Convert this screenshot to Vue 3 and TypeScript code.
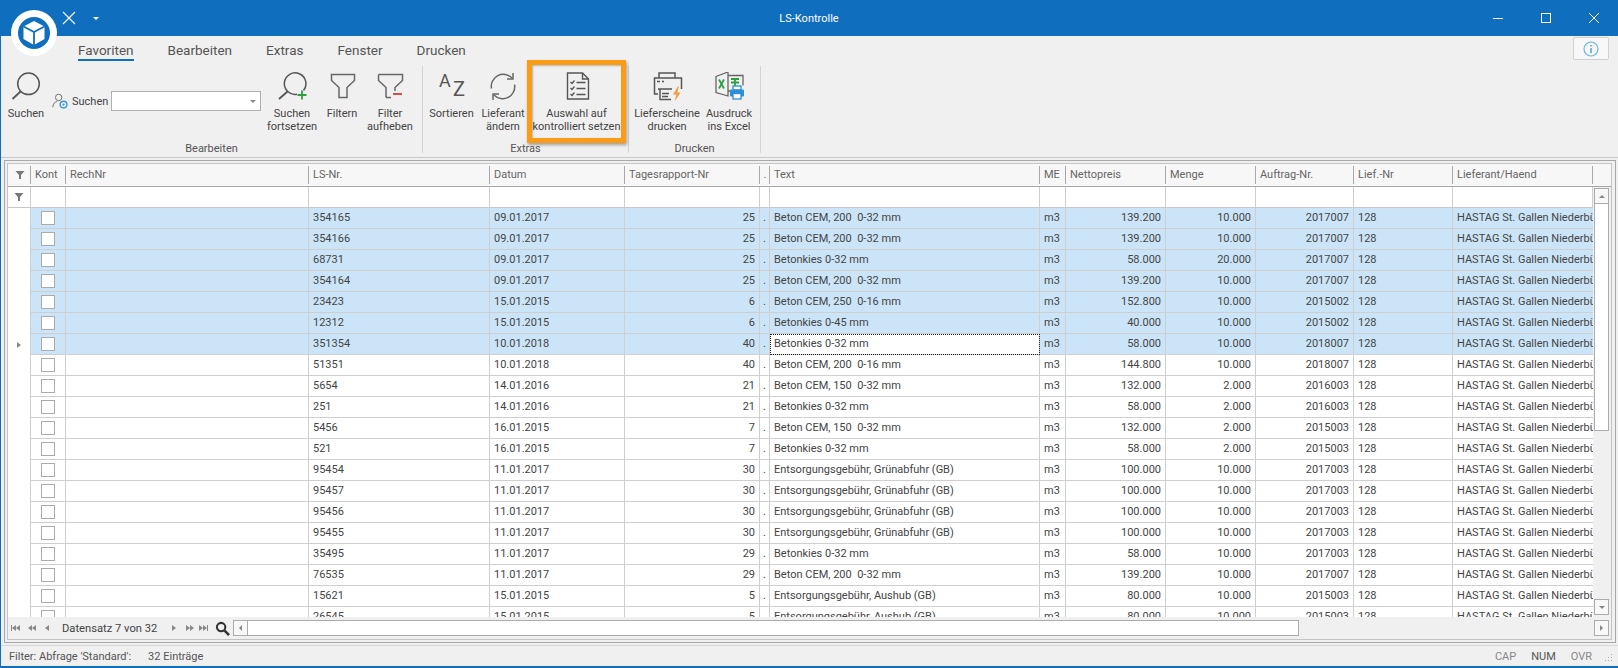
<script setup lang="ts">
type Row = [string, string, string, string, string, string, string];

const beton200 = "Beton CEM, 200\u00a0\u00a00-32 mm";
const beton150 = "Beton CEM, 150\u00a0\u00a00-32 mm";
const kies32 = "Betonkies 0-32 mm";
const gruen = "Entsorgungsgebühr, Grünabfuhr (GB)";
const aushub = "Entsorgungsgebühr, Aushub (GB)";

const rows: Row[] = [
  ["354165", "09.01.2017", "25", beton200, "139.200", "10.000", "2017007"],
  ["354166", "09.01.2017", "25", beton200, "139.200", "10.000", "2017007"],
  ["68731", "09.01.2017", "25", kies32, "58.000", "20.000", "2017007"],
  ["354164", "09.01.2017", "25", beton200, "139.200", "10.000", "2017007"],
  ["23423", "15.01.2015", "6", "Beton CEM, 250\u00a0\u00a00-16 mm", "152.800", "10.000", "2015002"],
  ["12312", "15.01.2015", "6", "Betonkies 0-45 mm", "40.000", "10.000", "2015002"],
  ["351354", "10.01.2018", "40", kies32, "58.000", "10.000", "2018007"],
  ["51351", "10.01.2018", "40", "Beton CEM, 200\u00a0\u00a00-16 mm", "144.800", "10.000", "2018007"],
  ["5654", "14.01.2016", "21", beton150, "132.000", "2.000", "2016003"],
  ["251", "14.01.2016", "21", kies32, "58.000", "2.000", "2016003"],
  ["5456", "16.01.2015", "7", beton150, "132.000", "2.000", "2015003"],
  ["521", "16.01.2015", "7", kies32, "58.000", "2.000", "2015003"],
  ["95454", "11.01.2017", "30", gruen, "100.000", "10.000", "2017003"],
  ["95457", "11.01.2017", "30", gruen, "100.000", "10.000", "2017003"],
  ["95456", "11.01.2017", "30", gruen, "100.000", "10.000", "2017003"],
  ["95455", "11.01.2017", "30", gruen, "100.000", "10.000", "2017003"],
  ["35495", "11.01.2017", "29", kies32, "58.000", "10.000", "2017003"],
  ["76535", "11.01.2017", "29", beton200, "139.200", "10.000", "2017007"],
  ["15621", "15.01.2015", "5", aushub, "80.000", "10.000", "2015003"],
  ["26545", "15.01.2015", "5", aushub, "80.000", "10.000", "2015003"],
];

const headers = ["Kont", "RechNr", "LS-Nr.", "Datum", "Tagesrapport-Nr", ".", "Text", "ME", "Nettopreis", "Menge", "Auftrag-Nr.", "Lief.-Nr", "Lieferant/Haend"];
const tabs = ["Favoriten", "Bearbeiten", "Extras", "Fenster", "Drucken"];
const selectedCount = 7;
const focusedRow = 6;
</script>

<template>
  <div class="window">
    <header class="titlebar">
      <svg class="qat-x" viewBox="0 0 14 14"><path d="M1 1l12 12M13 1L1 13" stroke="#fff" stroke-width="1.1" fill="none" /></svg>
      <span class="qat-arrow"></span>
      <span class="title">LS-Kontrolle</span>
      <div class="win-controls">
        <svg viewBox="0 0 12 12"><path d="M1 6.500h10" stroke="#fff" stroke-width="1" /></svg>
        <svg viewBox="0 0 12 12"><rect x="1.500" y="1.500" width="9" height="9" fill="none" stroke="#fff" stroke-width="1" /></svg>
        <svg viewBox="0 0 12 12"><path d="M1 1l10 10M11 1L1 11" stroke="#fff" stroke-width="1" /></svg>
      </div>
    </header>

    <div class="logo">
      <svg viewBox="0 0 46 46" width="46" height="46">
        <circle cx="23" cy="23" r="23" fill="#fff" />
        <circle cx="23" cy="23" r="16" fill="#106ebe" />
        <path d="M23 11l10.500 5.500v12.500L23 35l-10.500-6V16.500z" fill="#fff" />
        <path d="M12.500 16.500L23 22l10.500-5.500M23 22v13" fill="none" stroke="#106ebe" stroke-width="1.800" />
      </svg>
    </div>

    <nav class="tabs">
      <span v-for="(t, i) in tabs" :key="t" class="tab" :class="{ active: i === 0 }">{{ t }}</span>
      <button class="info">
        <svg viewBox="0 0 16 16" width="16" height="16">
          <circle cx="8" cy="8" r="7" fill="none" stroke="#6db2e3" stroke-width="1.200" />
          <path d="M8 7v5M8 4v1.600" stroke="#4d9ed9" stroke-width="1.500" />
        </svg>
      </button>
    </nav>

    <section class="ribbon">
      <div class="group g-edit">
        <div class="items">
          <div class="item w-suchen">
            <svg class="icon" viewBox="0 0 32 32"><circle cx="18.500" cy="11.800" r="10.800" fill="none" stroke="#555" stroke-width="1.500" /><path d="M10.500 19.500L2.500 27" stroke="#555" stroke-width="1.800" /></svg>
            <span class="label">Suchen</span>
          </div>
          <div class="search-field">
            <svg class="user-ic" viewBox="0 0 18 18" width="16" height="16">
              <circle cx="7.500" cy="5" r="3.600" fill="none" stroke="#666" stroke-width="1" />
              <path d="M1 16c0-4 2-6 5-6.500" fill="none" stroke="#666" stroke-width="1" />
              <circle cx="13" cy="13" r="3.800" fill="none" stroke="#3d97d6" stroke-width="1.600" />
              <circle cx="13" cy="13" r="1.300" fill="#3d97d6" />
            </svg>
            <span>Suchen</span>
            <div class="combo"><i></i></div>
          </div>
          <div class="item w-fort">
            <svg class="icon" viewBox="0 0 32 32"><path d="M27.500 18.500A10.800 10.800 0 1 0 21 22.300" fill="none" stroke="#555" stroke-width="1.500" /><path d="M11.500 19.500L3 27" stroke="#555" stroke-width="1.800" /><path d="M26 18.500v9M21.500 23h9" stroke="#2f9e44" stroke-width="1.800" /></svg>
            <span class="label">Suchen<br />fortsetzen</span>
          </div>
          <div class="item w-filter">
            <svg class="icon" viewBox="0 0 32 32"><path d="M5.500 2.500h23v6l-7.500 7v10h-8v-10l-7.500-7z" fill="none" stroke="#666" stroke-width="1.500" /></svg>
            <span class="label">Filtern</span>
          </div>
          <div class="item w-aufheben">
            <svg class="icon" viewBox="0 0 32 32"><path d="M4.500 2.500h24v6l-7.500 7v3.500M12 25.500v-10l-7.500-7v-6M12 25.500h5" fill="none" stroke="#666" stroke-width="1.500" /><path d="M19 22h9" stroke="#e0464c" stroke-width="2" /></svg>
            <span class="label">Filter<br />aufheben</span>
          </div>
        </div>
        <div class="group-name">Bearbeiten</div>
      </div>

      <div class="group g-extras">
        <div class="items">
          <div class="item w-sort">
            <svg class="icon" viewBox="0 0 32 32"><text x="3" y="15" class="az a">A</text><text x="17" y="24" class="az z">Z</text></svg>
            <span class="label">Sortieren</span>
          </div>
          <div class="item w-liefer">
            <svg class="icon" viewBox="0 0 32 32"><path d="M4.500 16.500A12 12 0 0 1 25 6M27.500 12.500A12 12 0 0 1 7 23" fill="none" stroke="#666" stroke-width="1.500" /><path d="M26 1v6h-6M6 28v-6h6" fill="none" stroke="#666" stroke-width="1.500" /></svg>
            <span class="label">Lieferant<br />ändern</span>
          </div>
          <div class="item w-auswahl">
            <svg class="icon" viewBox="0 0 32 32"><path d="M6.500 1h15l6 6v20h-21z M21.500 1v6h6" fill="none" stroke="#555" stroke-width="1.400" /><path d="M9.500 10l1.500 1.500L13.500 8.500M9.500 16l1.500 1.500L13.500 14.500M9.500 22l1.500 1.500L13.500 20.500" fill="none" stroke="#555" stroke-width="1.300" /><path d="M15.500 10.500h9M15.500 16.500h9M15.500 22.500h9" stroke="#555" stroke-width="1.600" /></svg>
            <span class="label">Auswahl auf<br />kontrolliert setzen</span>
            <div class="highlight"></div>
          </div>
        </div>
        <div class="group-name">Extras</div>
      </div>

      <div class="group g-print">
        <div class="items">
          <div class="item w-ls">
            <svg class="icon" viewBox="0 0 32 32"><g transform="translate(0 -1.500)"><path d="M8 7V2.500h16V7M7 23.500H3.500V7.500h27v11M7 18.500h14M9 18.500v10.500h11" fill="none" stroke="#555" stroke-width="1.500" /><path d="M6 11h3M11 11h2M11 23h7M11 26h6" stroke="#555" stroke-width="1.300" /><path d="M27 16l-5 8h3.500l-2 7 6-9h-3.500l2-6z" fill="#f29a38" /></g></svg>
            <span class="label">Lieferscheine<br />drucken</span>
          </div>
          <div class="item w-aus">
            <svg class="icon" viewBox="0 0 32 32"><g transform="translate(0 -2)"><path d="M3 6.500l12-4.500v24L3 22.500z" fill="#f0f0f0" stroke="#666" stroke-width="1.300" /><path d="M15 5.500h15v10M15 21h2" fill="none" stroke="#666" stroke-width="1.300" /><path d="M6 9.500l5 9M11 9.500l-5 9" stroke="#2f9e44" stroke-width="1.800" /><path d="M18 9h8M22 9v7M18 12.500h8" stroke="#2f9e44" stroke-width="1.800" /><rect x="20" y="16" width="8" height="4" fill="#fff" stroke="#2c8fd8" stroke-width="1.300" /><rect x="17" y="19.500" width="14" height="7" rx="1" fill="#2c8fd8" /><rect x="20" y="23.500" width="8" height="5.500" fill="#fff" stroke="#2c8fd8" stroke-width="1.300" /></g></svg>
            <span class="label">Ausdruck<br />ins Excel</span>
          </div>
        </div>
        <div class="group-name">Drucken</div>
      </div>
    </section>

    <main class="content">
      <div class="frame">
        <div class="gridbox">
          <div class="grid-row head">
            <div class="cell corner"><svg viewBox="0 0 10 10" width="10" height="10"><path d="M0.500 1h9L6 5v4H4V5z" fill="#777" /></svg></div>
            <div v-for="h in headers" :key="h" class="cell" :class="{ dot: h === '.' }">{{ h }}</div>
          </div>
          <div class="rows-wrap">
            <div class="grid-row filter">
              <div class="cell corner"><svg viewBox="0 0 10 10" width="10" height="10"><path d="M0.500 1h9L6 5v4H4V5z" fill="#777" /></svg></div>
              <div v-for="h in headers" :key="h" class="cell"></div>
            </div>
            <div class="body">
              <div
                v-for="(r, i) in rows"
                :key="r[0]"
                class="grid-row data"
                :class="{ selected: i < selectedCount }"
              >
                <div class="cell corner"><i v-if="i === focusedRow" class="indicator"></i></div>
                <div class="cell check"><span class="box"></span></div>
                <div class="cell"></div>
                <div class="cell">{{ r[0] }}</div>
                <div class="cell">{{ r[1] }}</div>
                <div class="cell num">{{ r[2] }}</div>
                <div class="cell dot">.</div>
                <div class="cell" :class="{ focused: i === focusedRow }">{{ r[3] }}</div>
                <div class="cell">m3</div>
                <div class="cell num">{{ r[4] }}</div>
                <div class="cell num">{{ r[5] }}</div>
                <div class="cell num">{{ r[6] }}</div>
                <div class="cell">128</div>
                <div class="cell last">HASTAG St. Gallen Niederbü</div>
              </div>
            </div>
            <div class="vscroll">
              <div class="sbtn"><i class="up"></i></div>
              <div class="thumb"></div>
              <div class="track"></div>
              <div class="sbtn"><i class="down"></i></div>
            </div>
          </div>
          <div class="navbar">
            <div class="nb"><i class="tri bar"></i><i class="tri l"></i><i class="tri l"></i></div>
            <div class="nb"><i class="tri l"></i><i class="tri l"></i></div>
            <div class="nb"><i class="tri l"></i></div>
            <span class="record">Datensatz 7 von 32</span>
            <div class="nb r"><i class="tri r"></i></div>
            <div class="nb r"><i class="tri r"></i><i class="tri r"></i></div>
            <div class="nb r"><i class="tri r"></i><i class="tri r"></i><i class="tri bar"></i></div>
            <svg class="lens" viewBox="0 0 16 16" width="15" height="15"><circle cx="6.500" cy="6.500" r="4.500" fill="none" stroke="#333" stroke-width="2.200" /><path d="M10 10l5 5" stroke="#333" stroke-width="2.800" /></svg>
            <div class="hscroll">
              <div class="sbtn h"><i class="left"></i></div>
              <div class="hthumb"></div>
              <div class="htrack"></div>
              <div class="sbtn h"><i class="right"></i></div>
            </div>
          </div>
        </div>
      </div>
    </main>

    <footer class="status">
      <span class="st-filter">Filter: Abfrage 'Standard':</span>
      <span class="st-count">32 Einträge</span>
      <span class="st-keys">
        <span class="dim">CAP</span><span>NUM</span><span class="dim">OVR</span>
      </span>
      <svg class="grip" viewBox="0 0 10 10" width="10" height="10"><path d="M8 1h1v1H8zM5 4h1v1H5zM8 4h1v1H8zM2 7h1v1H2zM5 7h1v1H5zM8 7h1v1H8z" fill="#aaa" /></svg>
    </footer>
  </div>
</template>

<style>
html,
body {
  margin: 0;
  overflow: hidden;
}
</style>

<style scoped>
.window {
  position: relative;
  width: 1618px;
  height: 668px;
  box-sizing: border-box;
  display: flex;
  flex-direction: column;
  background: #f0f0f0;
  border-left: 1px solid #106ebe;
  border-bottom: 2px solid #106ebe;
  font-family: Roboto, "Noto Sans", sans-serif;
  font-size: 11px;
  color: #444;
  overflow: hidden;
}

.titlebar {
  height: 36px;
  flex: none;
  margin-left: -1px;
  background: #106ebe;
  color: #fff;
  display: flex;
  align-items: center;
  position: relative;
}
.qat-x {
  width: 14px;
  height: 14px;
  margin-left: 62px;
}
.qat-arrow {
  margin-left: 17px;
  border: 3px solid transparent;
  border-top: 3px solid #fff;
  border-bottom: 0;
}
.title {
  position: absolute;
  left: 0;
  right: 0;
  text-align: center;
  font-size: 11px;
}
.win-controls {
  margin-left: auto;
  display: flex;
  gap: 36px;
  margin-right: 18px;
}
.win-controls svg {
  width: 12px;
  height: 12px;
}

.logo {
  position: absolute;
  left: 10px;
  top: 10px;
  width: 46px;
  height: 46px;
}

.tabs {
  height: 26px;
  flex: none;
  display: flex;
  gap: 34px;
  padding-left: 77px;
  align-items: flex-start;
  position: relative;
}
.tab {
  font-size: 13.500px;
  line-height: 18px;
  padding-top: 5px;
  color: #555;
}
.tab.active {
  border-bottom: 2px solid #106ebe;
}
.info {
  margin-left: auto;
  margin-right: 9px;
  width: 36px;
  height: 23px;
  margin-top: 1px;
  background: #f8f8f8;
  border: 1px solid #d0d0d0;
  border-radius: 2px;
  padding: 0;
  display: flex;
  align-items: center;
  justify-content: center;
}

.ribbon {
  height: 96px;
  flex: none;
  display: flex;
  border-bottom: 1px solid #c8c8c8;
  box-sizing: border-box;
}
.group {
  display: flex;
  flex-direction: column;
  border-right: 1px solid #d4d4d4;
  margin: 4px 0;
  box-sizing: border-box;
}
.g-edit {
  width: 422px;
}
.g-extras {
  width: 206px;
}
.g-print {
  width: 132px;
}
.items {
  flex: 1;
  display: flex;
  min-height: 0;
}
.group-name {
  text-align: center;
  line-height: 16px;
  height: 16px;
  margin-bottom: -4px;
  color: #555;
}
.item {
  position: relative;
  display: flex;
  flex-direction: column;
  align-items: center;
  text-align: center;
  padding-top: 6px;
  line-height: 13px;
  color: #444;
}
.icon {
  width: 32px;
  height: 32px;
  flex: none;
}
.label {
  margin-top: 3px;
}
.w-suchen {
  width: 50px;
}
.search-field {
  display: flex;
  align-items: center;
  height: 20px;
  margin-top: 25px;
  width: 211px;
}
.user-ic {
  margin-left: 1px;
}
.search-field span {
  margin-left: 4px;
}
.combo {
  width: 148px;
  height: 18px;
  margin-left: 3px;
  background: #fff;
  border: 1px solid #b0b0b0;
  position: relative;
}
.combo i {
  position: absolute;
  right: 4px;
  top: 8px;
  border: 3px solid transparent;
  border-top-color: #888;
  border-bottom: 0;
}
.w-fort {
  width: 60px;
}
.w-filter {
  width: 40px;
}
.w-aufheben {
  width: 56px;
}
.w-sort {
  width: 57px;
}
.w-liefer {
  width: 46px;
}
.w-auswahl {
  width: 99px;
  margin-left: 1px;
}
.highlight {
  position: absolute;
  left: 0;
  right: 0;
  top: -6px;
  height: 83px;
  box-sizing: border-box;
  border: 5px solid #fb9c17;
  box-shadow: 1px 2px 3px rgba(0, 0, 0, 0.35), inset 1px 1px 2px rgba(0, 0, 0, 0.25);
}
.w-ls {
  width: 76px;
}
.w-aus {
  width: 48px;
}
.az {
  fill: #555;
  font-family: Roboto, sans-serif;
  font-weight: 400;
}
.az.a {
  font-size: 18px;
}
.az.z {
  font-size: 20px;
}

.content {
  flex: 1;
  min-height: 0;
  padding: 2px 2px 2px 3px;
}
.frame {
  height: 100%;
  box-sizing: border-box;
  border: 1px solid #a8a8a8;
  padding: 2px 3px 2px 2px;
  background: #f0f0f0;
}
.gridbox {
  height: 100%;
  box-sizing: border-box;
  border: 1px solid #c4c4c4;
  display: flex;
  flex-direction: column;
  background: #f0f0f0;
}
.grid-row {
  display: grid;
  grid-template-columns: 23px 35px 243px 181px 135px 135px 10px 270px 26px 100px 90px 98px 99px 140px;
}
.cell {
  box-sizing: border-box;
  padding: 0 4px;
  white-space: nowrap;
  overflow: hidden;
  min-width: 0;
}
.head {
  flex: none;
  height: 23px;
  line-height: 22px;
  background: #f7f7f7;
  border-bottom: 1px solid #a8a8a8;
  box-sizing: border-box;
  color: #666;
}
.head .cell {
  position: relative;
}
.head .cell::after {
  content: "";
  position: absolute;
  right: 0;
  top: 2px;
  bottom: 2px;
  width: 1px;
  background: #a8a8a8;
}
.corner {
  display: flex;
  align-items: center;
  justify-content: center;
  padding: 0;
}
.rows-wrap {
  flex: 1;
  min-height: 0;
  position: relative;
  display: flex;
  flex-direction: column;
}
.filter {
  flex: none;
  width: 1585px;
  height: 21px;
  border-bottom: 1px solid #c8c8c8;
  box-sizing: border-box;
  background: #fff;
}
.filter .cell,
.data .cell {
  border-right: 1px solid #cfcfcf;
}
.body {
  flex: 1;
  min-height: 0;
  overflow: hidden;
}
.data {
  width: 1585px;
  height: 21px;
  line-height: 20px;
  box-sizing: border-box;
  background: #fff;
  color: #444;
}
.data .cell {
  border-bottom: 1px solid #cfcfcf;
}
.data .corner {
  border-bottom: 0;
  background: #fff;
}
.data .last {
  border-right: 0;
  padding-right: 0;
}
.data.selected .cell:not(.corner):not(.focused) {
  background: #cce4f7;
}
.focused {
  background: #fff;
  outline: 1px dotted #222;
  outline-offset: -1px;
}
.num {
  text-align: right;
}
.dot {
  padding: 0;
  text-align: center;
}
.check {
  display: flex;
  align-items: center;
  justify-content: center;
}
.box {
  width: 12px;
  height: 12px;
  background: #fff;
  border: 1px solid #ababab;
}
.indicator {
  border: 3px solid transparent;
  border-left: 4px solid #888;
  border-right: 0;
}

.vscroll {
  position: absolute;
  right: 2px;
  top: 1px;
  bottom: 2px;
  width: 15px;
  display: flex;
  flex-direction: column;
  box-sizing: border-box;
}
.sbtn {
  height: 16px;
  flex: none;
  background: #f8f8f8;
  border: 1px solid #acacac;
  box-sizing: border-box;
  display: flex;
  align-items: center;
  justify-content: center;
}
.thumb {
  height: 227px;
  flex: none;
  background: #fff;
  border: 1px solid #acacac;
  border-top: 0;
  box-sizing: border-box;
}
.track {
  flex: 1;
}
.sbtn i {
  border: 3px solid transparent;
}
.sbtn .up {
  border-top: 0;
  border-bottom-color: #888;
}
.sbtn .down {
  border-bottom: 0;
  border-top-color: #888;
}
.sbtn .left {
  border-left: 0;
  border-right-color: #888;
}
.sbtn .right {
  border-right: 0;
  border-left-color: #888;
}

.navbar {
  height: 22px;
  flex: none;
  display: flex;
  align-items: center;
  padding-left: 3px;
  background: #f0f0f0;
}
.nb {
  width: 17px;
  flex: none;
  display: flex;
  align-items: center;
}
.nb.r {
  width: 13.500px;
}
.tri {
  width: 0;
  height: 0;
  border: 3px solid transparent;
}
.tri.l {
  border-left: 0;
  border-right: 4px solid #888;
}
.tri.r {
  border-right: 0;
  border-left: 4px solid #888;
}
.tri.bar {
  width: 1px;
  height: 6px;
  border: 0;
  background: #888;
}
.record {
  width: 110px;
  flex: none;
  font-size: 11.200px;
  color: #444;
}
.lens {
  margin-left: 2px;
  flex: none;
}
.hscroll {
  margin-left: 3px;
  display: flex;
  flex: 1;
  height: 16px;
  margin-right: 2px;
}
.sbtn.h {
  width: 15px;
  height: 16px;
}
.hthumb {
  width: 1051px;
  background: #fff;
  border: 1px solid #acacac;
  border-left: 0;
  box-sizing: border-box;
}
.htrack {
  flex: 1;
}

.status {
  height: 21px;
  flex: none;
  box-sizing: border-box;
  border-top: 1px solid #d8d8d8;
  display: flex;
  align-items: center;
  padding-left: 8px;
  font-size: 11px;
  color: #555;
}
.st-count {
  margin-left: 17px;
}
.st-keys {
  margin-left: auto;
  display: flex;
  gap: 15px;
  color: #555;
}
.dim {
  color: #888;
}
.grip {
  margin: 4px 5px 0 11px;
}
</style>
